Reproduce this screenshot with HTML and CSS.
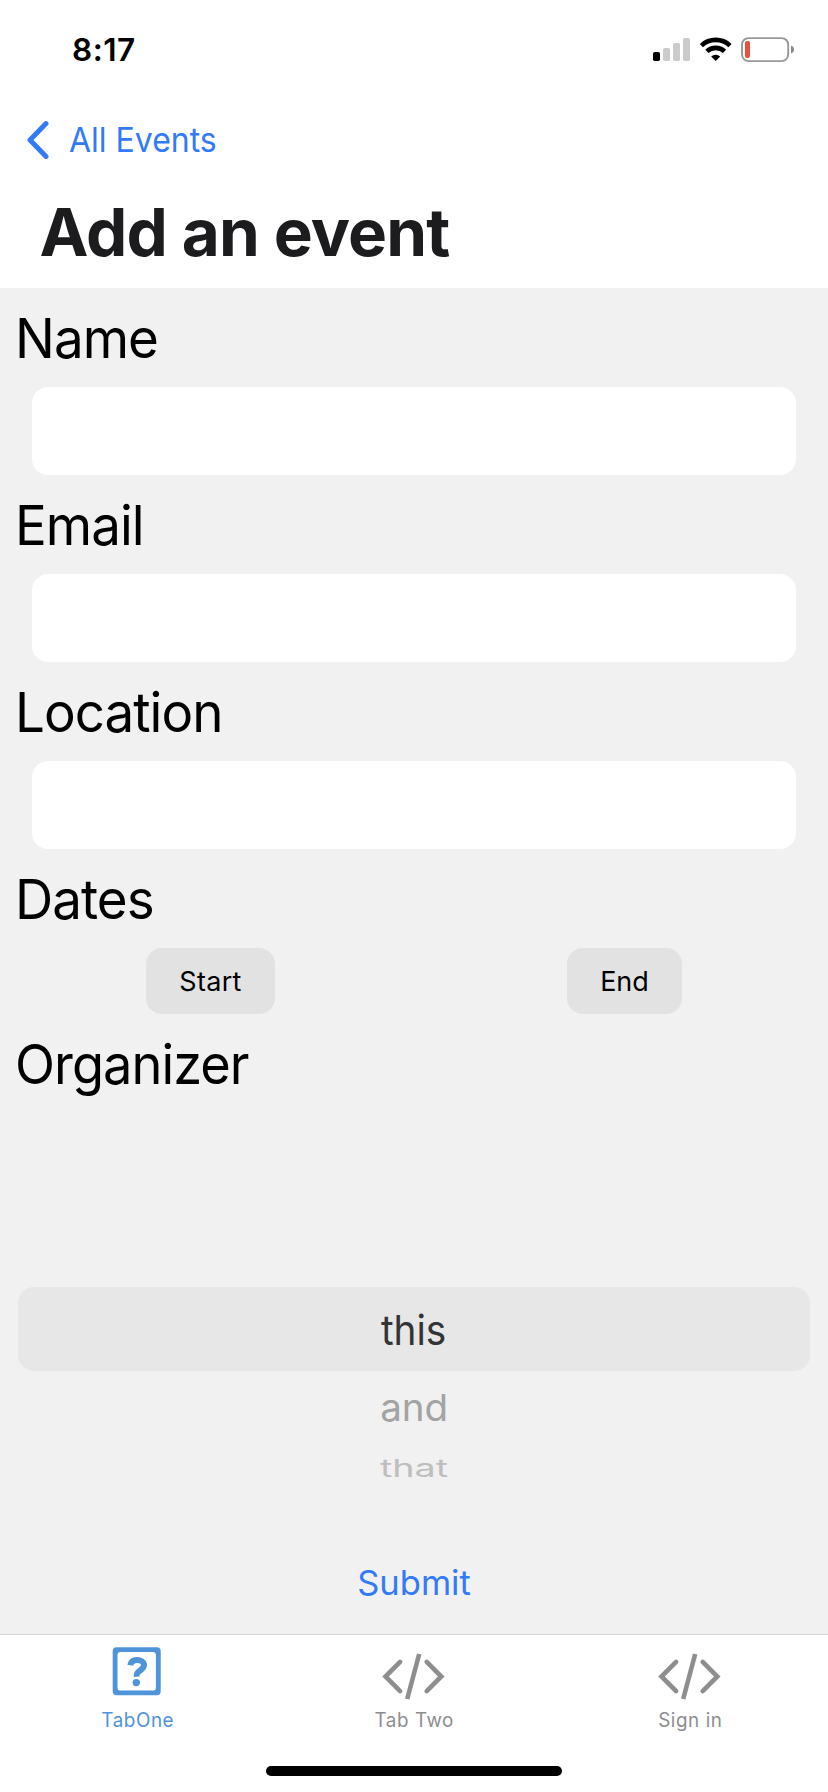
FILE: index.html
```html
<!DOCTYPE html>
<html lang="en">
<head>
<meta charset="utf-8">
<title>Add an event</title>
<link rel="stylesheet" href="styles.css">
</head>
<body>
<div class="screen">
  <div class="status-bar">
    <span class="time">8:17</span>
    <svg class="status-icons" width="142" height="26" viewBox="0 0 142 26">
      <rect x="0" y="15" width="7" height="9" rx="1.8" fill="#000"/>
      <rect x="10" y="11" width="7" height="13" rx="1.8" fill="#cbcbcb"/>
      <rect x="20" y="6" width="7" height="18" rx="1.8" fill="#cbcbcb"/>
      <rect x="30" y="1" width="7" height="23" rx="1.8" fill="#cbcbcb"/>
      <g fill="none" stroke="#000" stroke-width="4.6">
        <path d="M48.4 8.6A20.8 20.8 0 0 1 77 8.6"/>
        <path d="M53.9 14.4A12.7 12.7 0 0 1 71.5 14.4"/>
      </g>
      <path d="M58.2 19.5A6.5 6.5 0 0 1 67.2 19.5L62.7 24Z" fill="#000"/>
      <rect x="89" y="1.1" width="46.2" height="23" rx="6.5" fill="none" stroke="#999" stroke-width="1.9"/>
      <path d="M138 8.5C140 9.2 141 10.6 141 12.5S140 15.8 138 16.5Z" fill="#888"/>
      <rect x="92" y="4" width="5" height="17" rx="2" fill="#ea4e3d"/>
    </svg>
  </div>
  <header class="header">
    <a class="back">
      <svg class="chevron" width="22" height="40" viewBox="0 0 22 40"><path d="M19 3.6L3 20L19 36.4" fill="none" stroke="#327af7" stroke-width="5" stroke-linecap="round" stroke-linejoin="round"/></svg>
      <span class="back-label">All Events</span>
    </a>
    <h1 class="title">Add an event</h1>
  </header>
  <main class="form">
    <label class="label" for="name">Name</label>
    <input class="field" id="name">
    <label class="label" for="email">Email</label>
    <input class="field" id="email">
    <label class="label" for="location">Location</label>
    <input class="field" id="location">
    <div class="label">Dates</div>
    <div class="dates">
      <button class="date-button start">Start</button>
      <button class="date-button end">End</button>
    </div>
    <div class="label organizer">Organizer</div>
    <div class="picker">
      <div class="option selected"><span class="word this">this</span></div>
      <div class="option near"><span class="word and">and</span></div>
      <div class="option far"><span class="word that">that</span></div>
    </div>
    <button class="submit">Submit</button>
  </main>
  <nav class="tabs">
    <a class="tab active">
      <svg class="tab-icon" width="64" height="56" viewBox="0 0 64 56">
        <path transform="translate(.7 .2)" fill-rule="evenodd" fill="#4f93d8" d="M11 4H50A4 4 0 0 1 54 8V48A4 4 0 0 1 50 52H10A4 4 0 0 1 6 48V8A4 4 0 0 1 10 4ZM14 8.7A3.2 3.2 0 0 0 10.8 11.9V44.2A3.2 3.2 0 0 0 14 47.4H46A3.2 3.2 0 0 0 49.2 44.2V11.9A3.2 3.2 0 0 0 46 8.7Z"/>
        <path d="M24.3 22.3C24.8 18.9 27.2 17 30.9 17C35.2 17 38 19 38 22C38 24.6 36.6 25.8 34.2 27.4C31.4 29.2 30.4 30.3 30.6 33.7" fill="none" stroke="#4f93d8" stroke-width="6"/>
        <circle cx="30.3" cy="39.6" r="3.7" fill="#4f93d8"/>
      </svg>
      <span class="tab-label">TabOne</span>
    </a>
    <a class="tab">
      <svg class="tab-icon" width="64" height="56" viewBox="0 0 64 56"><g fill="none" stroke="#8e8e8f" stroke-width="4.6"><path d="M18.1 18.9L3.5 33.5L18.1 48.1M44.7 18.9L59.3 33.5L44.7 48.1" stroke-linecap="round"/><path d="M37.2 11L25.2 56"/></g></svg>
      <span class="tab-label">Tab Two</span>
    </a>
    <a class="tab">
      <svg class="tab-icon" width="64" height="56" viewBox="0 0 64 56"><g fill="none" stroke="#8e8e8f" stroke-width="4.6"><path d="M18.1 18.9L3.5 33.5L18.1 48.1M44.7 18.9L59.3 33.5L44.7 48.1" stroke-linecap="round"/><path d="M37.2 11L25.2 56"/></g></svg>
      <span class="tab-label">Sign in</span>
    </a>
  </nav>
  <div class="home-indicator"></div>
</div>
</body>
</html>
```
FILE: styles.css
```css
* { box-sizing: border-box; }
body { margin: 0; background: #fff; font-family: Inter, "Liberation Sans", sans-serif; color: #000; }
.screen { width: 828px; height: 1792px; display: flex; flex-direction: column; overflow: hidden; }
.status-bar { height: 100px; display: flex; justify-content: space-between; align-items: flex-start; padding: 36px 33px 0 72px; }
.time { font-size: 31.5px; font-weight: 600; line-height: 28px; letter-spacing: .5px; }
.status-icons { margin-top: 1px; }
.header { height: 188px; }
.back { display: flex; align-items: center; height: 80px; padding-left: 26.5px; color: #327af7; }
.back-label { margin-left: 20px; font-size: 33.5px; line-height: 40px; transform: scaleX(.955); transform-origin: left; }
.title { margin: 12px 0 0 39.5px; font-size: 65.6px; font-weight: 700; line-height: 80px; letter-spacing: -.85px; color: #1c1c1e; }
.form { height: 1346px; background: #f1f1f1; display: flex; flex-direction: column; }
.label { flex: none; align-self: flex-start; height: 99px; margin-left: 14.5px; font-size: 55px; line-height: 101px; letter-spacing: -1px; transform: scaleX(.962); transform-origin: left; }
.organizer { margin-left: 14.5px; transform: scaleX(.951); }
.field { flex: none; height: 88px; margin: 0 32px; border: 0; border-radius: 16px; background: #fff; padding: 0 20px; font: 34px Inter, sans-serif; }
.dates { flex: none; height: 66px; display: flex; justify-content: space-around; }
.date-button { height: 66px; padding: 1px 0 0; border: 0; border-radius: 16px; background: #e2e2e2; color: #000; font: 27px/65px Inter, sans-serif; }
.start { width: 129px; letter-spacing: .3px; }
.end { width: 115px; }
.picker { flex: none; height: 434px; padding: 174px 18px 0; }
.option { display: flex; justify-content: center; align-items: center; }
.selected { height: 84px; padding-top: 1px; border-radius: 16px; background: #e7e7e7; color: #343436; }
.near { height: 72px; color: #a3a3a3; }
.far { height: 50px; color: #bebebe; }
.word { display: block; font-size: 41px; line-height: 48px; }
.this { transform: scaleX(.945); }
.and { transform: scale(.94, .91); }
.that { transform: scale(.92, .6); }
.submit { align-self: center; height: 70px; border: 0; padding: 2px 0 0; background: none; color: #327af7; font: 34.5px/68px Inter, sans-serif; }
.tabs { height: 132px; border-top: 1px solid #d6d6d6; display: grid; grid-template-columns: repeat(3, 276px); }
.tab { display: flex; flex-direction: column; align-items: center; padding-top: 8px; color: #8e8e8f; }
.tab.active { color: #4f93d8; }
.tab-icon { flex: none; overflow: visible; }
.tab-label { margin-top: 8px; font-size: 19.5px; line-height: 26px; letter-spacing: .6px; transform: scaleX(.965); }
.home-indicator { flex: none; width: 296px; height: 10px; margin: 0 auto; border-radius: 5px; background: #000; }
```
